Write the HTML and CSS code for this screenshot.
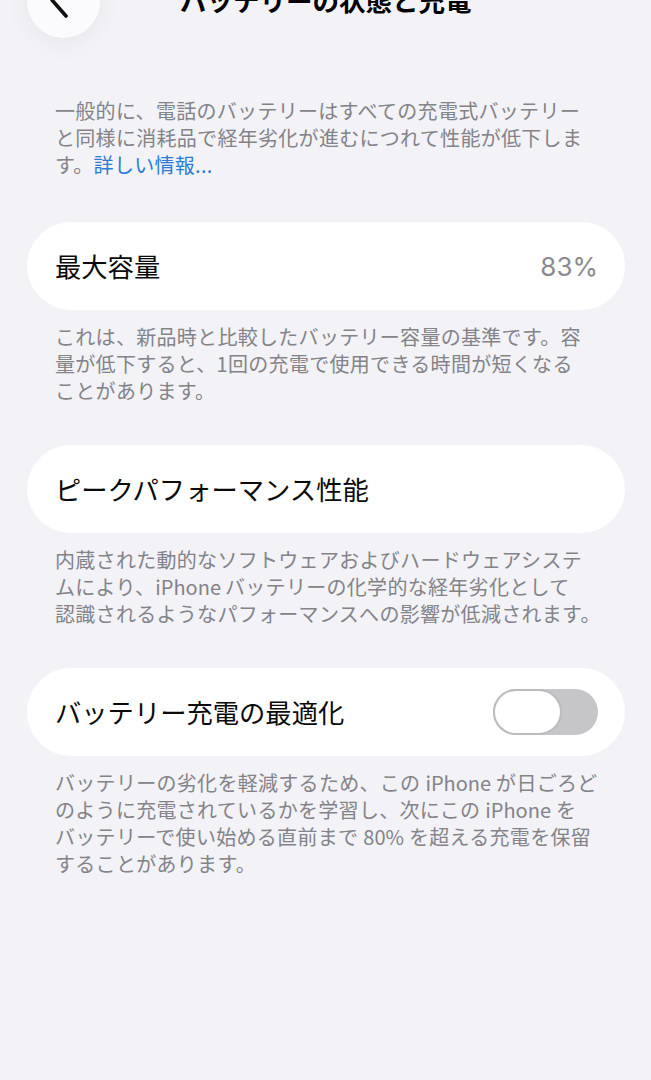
FILE: index.html
```html
<!DOCTYPE html>
<html lang="ja">
<head>
<meta charset="utf-8">
<link rel="stylesheet" href="styles.css">
</head>
<body>
<div class="page">
  <header class="header">
    <div class="back">
      <svg class="chev" width="30" height="40" viewBox="0 0 30 40"><path d="M20 3 L6 19 L20 35" fill="none" stroke="#111" stroke-width="3.6" stroke-linecap="round" stroke-linejoin="round"/></svg>
    </div>
    <h1 class="title">バッテリーの状態と充電</h1>
  </header>

  <p class="note intro">一般的に、電話のバッテリーはすべての充電式バッテリー<br>と同様に消耗品で経年劣化が進むにつれて性能が低下しま<br>す。<span class="link">詳しい情報...</span></p>

  <div class="card">
    <span class="label">最大容量</span>
    <span class="value">83%</span>
  </div>
  <p class="note">これは、新品時と比較したバッテリー容量の基準です。容<br>量が低下すると、1回の充電で使用できる時間が短くなる<br>ことがあります。</p>

  <div class="card">
    <span class="label">ピークパフォーマンス性能</span>
  </div>
  <p class="note">内蔵された動的なソフトウェアおよびハードウェアシステ<br>ムにより、<span class="lat lat-tail">iPhone</span>バッテリーの化学的な経年劣化として<br>認識されるようなパフォーマンスへの影響が低減されます。</p>

  <div class="card">
    <span class="label">バッテリー充電の最適化</span>
    <span class="toggle"><span class="knob"></span></span>
  </div>
  <p class="note">バッテリーの劣化を軽減するため、この<span class="lat">iPhone</span>が日ごろど<br>のように充電されているかを学習し、次にこの<span class="lat">iPhone</span>を<br>バッテリーで使い始める直前まで<span class="lat">80%</span>を超える充電を保留<br>することがあります。</p>
</div>
</body>
</html>
```

FILE: styles.css
```css
html, body {
  margin: 0;
  padding: 0;
  background: #f2f2f7;
}
body {
  font-family: "Noto Sans CJK JP", "Noto Sans", sans-serif;
  color: #000;
  overflow: hidden;
}
.page {
  width: 651px;
  height: 1080px;
  box-sizing: border-box;
  padding: 0 26px 0 27px;
}
.header {
  height: 74px;
  margin-top: -36px;
  display: flex;
  align-items: center;
}
.back {
  width: 73px;
  height: 73px;
  border-radius: 50%;
  background: #fbfbfd;
  box-shadow: 0 4px 24px rgba(0, 0, 0, 0.06);
  display: flex;
  align-items: center;
  justify-content: center;
  flex-shrink: 0;
}
.chev {
  margin-left: -6px;
}
.title {
  flex: 1;
  margin: -2px 0 0 80px;
  font-size: 26.5px;
  font-weight: 700;
  line-height: 1;
}
.note {
  margin: 0;
  padding: 13px 0 41px 28px;
  font-size: 20px;
  line-height: 27px;
  color: #838388;
  letter-spacing: 0.3px;
  white-space: nowrap;
}
.intro {
  padding-top: 0;
  margin-top: 59px;
  padding-bottom: 44px;
}
.link {
  color: #2d7bd6;
}
.lat {
  margin: 0 5px;
  letter-spacing: 0;
}
.lat-tail {
  margin: 0 4px 0 0;
}
.card {
  height: 88px;
  border-radius: 44px;
  background: #fff;
  display: flex;
  align-items: center;
  justify-content: space-between;
  padding: 0 27px 0 28px;
}
.label {
  font-size: 26.3px;
  line-height: 1;
  color: #0a0a0a;
}
.value {
  font-family: "Inter", "Noto Sans", sans-serif;
  font-size: 26px;
  color: #8a8a8e;
}
.toggle {
  width: 105px;
  height: 46px;
  border-radius: 23px;
  background: #c6c6c9;
  display: flex;
  align-items: center;
}
.knob {
  width: 69px;
  height: 46px;
  box-sizing: border-box;
  border-radius: 23px;
  background: #fff;
  border: 2.5px solid #bdbdc0;
}
```
